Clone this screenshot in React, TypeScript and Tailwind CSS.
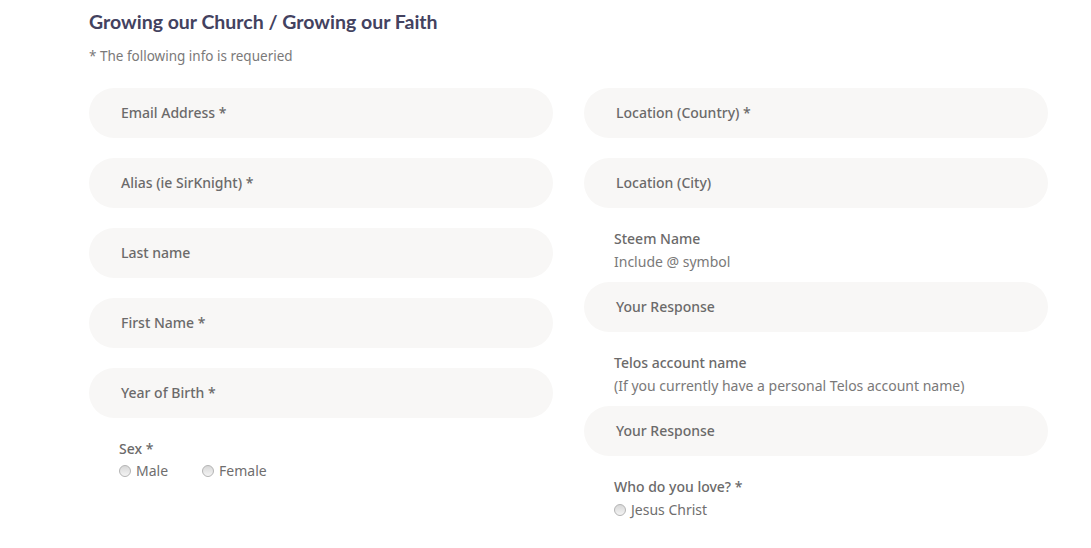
import React from 'react'

const Field = ({ label }: { label: string }) => (
  <div className="flex h-[50px] items-center rounded-full bg-[#f8f7f6] px-8 pb-[1px] text-[14px] font-medium text-[#6b6a6a]">
    {label}
  </div>
)

const Radio = ({ label }: { label: string }) => (
  <label className="flex items-center gap-[5px] text-[14px] leading-[20px] text-[#6f6e6e]">
    <span className="h-[12px] w-[12px] rounded-full border border-[#b4b4b4] bg-gradient-to-b from-[#d8d8d8] to-[#f4f4f4]" />
    {label}
  </label>
)

export default function App() {
  return (
    <div
      className="min-h-[548px] bg-white pl-[89px] pt-[10px]"
      style={{ fontFamily: '"Noto Sans", Lato, sans-serif' }}
    >
      <h2 className="font-['Lato'] text-[19.5px] font-bold leading-[24px] text-[#43425f]">
        Growing our Church / Growing our Faith
      </h2>
      <p className="mt-[13px] text-[13.5px] leading-[18px] text-[#7a7979]">* The following info is requeried</p>

      <div className="mt-[23px] grid grid-cols-[464px_464px] gap-x-[31px]">
        <div className="flex flex-col gap-5">
          <Field label="Email Address *" />
          <Field label="Alias (ie SirKnight)  *" />
          <Field label="Last name" />
          <Field label="First Name *" />
          <Field label="Year of Birth *" />
          <div className="pl-[30px] pt-[2px]">
            <div className="text-[14px] font-medium leading-[18px] text-[#6b6a6a]">Sex *</div>
            <div className="mt-[3px] flex gap-[34px]">
              <Radio label="Male" />
              <Radio label="Female" />
            </div>
          </div>
        </div>

        <div className="flex flex-col">
          <Field label="Location (Country) *" />
          <div className="mt-5">
            <Field label="Location (City)" />
          </div>
          <div className="pl-[30px] pt-[19px] text-[14px] leading-[23px]">
            <div className="font-medium text-[#6b6a6a]">Steem Name</div>
            <div className="text-[#7a7979]">Include @ symbol</div>
          </div>
          <div className="mt-[9px]">
            <Field label="Your Response" />
          </div>
          <div className="pl-[30px] pt-[19px] text-[14px] leading-[23px]">
            <div className="font-medium text-[#6b6a6a]">Telos account name</div>
            <div className="text-[#7a7979]">(If you currently have a personal Telos account name)</div>
          </div>
          <div className="mt-[9px]">
            <Field label="Your Response" />
          </div>
          <div className="pl-[30px] pt-[19px] text-[14px] leading-[23px]">
            <div className="font-medium text-[#6b6a6a]">Who do you love? *</div>
            <div className="mt-[2px]">
              <Radio label="Jesus Christ" />
            </div>
          </div>
        </div>
      </div>
    </div>
  )
}
